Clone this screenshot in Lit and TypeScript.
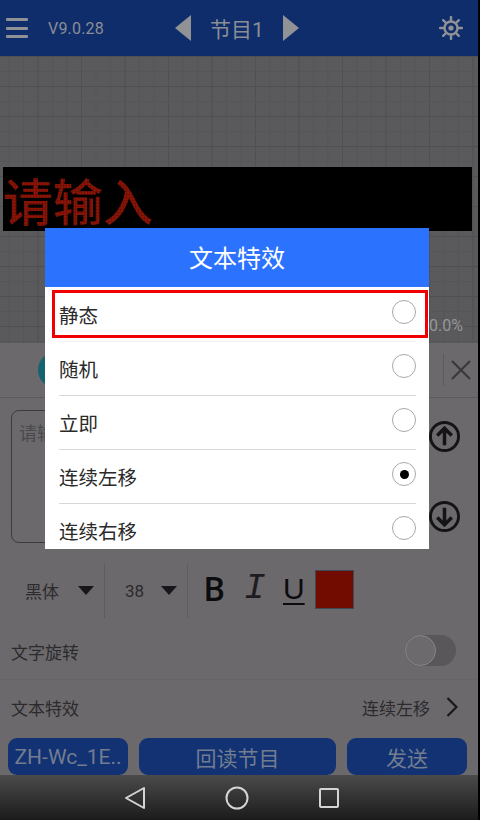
import { LitElement, html, css } from 'lit';
import { customElement } from 'lit/decorators.js';

const EFFECTS = ['静态', '随机', '立即', '连续左移', '连续右移'];
const CHECKED = '连续左移';

@customElement('app-root')
export class AppRoot extends LitElement {
  static styles = css`
    :host {
      display: block;
      position: relative;
      width: 480px;
      height: 820px;
      overflow: hidden;
      background: #000;
      font-family: 'Roboto', 'Noto Sans CJK SC', sans-serif;
      color: #2b2a2d;
    }
    .screen {
      width: 478px;
      height: 820px;
      display: flex;
      flex-direction: column;
    }

    /* top bar */
    .top {
      height: 56px;
      background: #0f2d6b;
      display: flex;
      align-items: center;
      color: #8b8e95;
      flex: none;
    }
    .burger {
      margin-left: 6px;
      width: 22px;
      height: 20px;
      display: flex;
      flex-direction: column;
      justify-content: space-between;
    }
    .burger i {
      display: block;
      height: 3px;
      border-radius: 1px;
      background: #8f9196;
    }
    .version {
      margin-left: 20px;
      width: 60px;
      font-size: 16px;
      letter-spacing: 0.2px;
    }
    .title {
      margin-left: 67px;
      display: flex;
      align-items: center;
      font-size: 21px;
    }
    .title span {
      margin: 0 21px 0 19px;
      width: 52px;
      white-space: nowrap;
    }
    .gear {
      margin-left: auto;
      margin-right: 15px;
    }

    /* led preview */
    .canvas {
      height: 287px;
      flex: none;
      position: relative;
      background-color: #5a595b;
      background-image: linear-gradient(to bottom, #4f4e50 1px, transparent 1px),
        linear-gradient(to bottom, #565557 1px, transparent 1px),
        linear-gradient(to right, #505052 1px, transparent 1px),
        linear-gradient(to right, #555456 1px, transparent 1px);
      background-size: 100% 30px, 100% 15px, 43.5px 100%, 14.5px 100%;
      background-position: 0 0, 0 0, -6px 0, -6px 0;
    }
    .led {
      position: absolute;
      left: 3px;
      top: 111px;
      width: 469px;
      height: 64px;
      background: #000;
    }
    .led span {
      position: absolute;
      left: 0;
      top: 0;
      font-family: 'Noto Sans CJK SC', sans-serif;
      font-size: 50px;
      font-weight: 500;
      line-height: 64px;
      color: #8c1407;
      white-space: nowrap;
    }
    .led::after {
      content: '';
      position: absolute;
      inset: 0;
      background-image: linear-gradient(to bottom, rgba(0, 0, 0, 0.14) 1px, transparent 1px),
        linear-gradient(to right, rgba(0, 0, 0, 0.14) 1px, transparent 1px);
      background-size: 100% 3px, 3px 100%;
    }
    .percent {
      position: absolute;
      right: 15px;
      bottom: 8px;
      font-size: 16px;
      color: #96969a;
    }

    /* bottom panel */
    .panel {
      flex: 1;
      background: #6b696c;
      display: flex;
      flex-direction: column;
    }
    .tabs {
      height: 54px;
      flex: none;
      border-bottom: 1px solid #5c5a5d;
      display: flex;
      align-items: center;
    }
    .avatar {
      margin-left: 38px;
      width: 36px;
      height: 36px;
      border-radius: 50%;
      background: #14636e;
    }
    .tab-end {
      margin-left: auto;
      height: 32px;
      padding-left: 7px;
      margin-right: 7px;
      border-left: 1px solid #5c5a5d;
      display: flex;
      align-items: center;
    }
    .editor {
      flex: none;
      height: 165px;
      box-sizing: border-box;
      padding: 12px 18px 20px 11px;
      display: flex;
    }
    .area {
      flex: 1;
      height: 133px;
      box-sizing: border-box;
      border: 1px solid #3c3b3e;
      border-radius: 8px;
      padding: 9px 7px;
      font-family: 'Noto Sans CJK SC', sans-serif;
      font-size: 18px;
      line-height: 24px;
      color: #4a494c;
    }
    .moves {
      width: 31px;
      padding-top: 11px;
      display: flex;
      flex-direction: column;
      gap: 49px;
    }
    .tools {
      height: 55px;
      flex: none;
      display: flex;
      align-items: center;
      font-size: 17px;
    }
    .pick {
      height: 54px;
      box-sizing: border-box;
      border-right: 1px solid #5e5c5f;
      display: flex;
      align-items: center;
    }
    .pick span {
      white-space: nowrap;
    }
    .pick i {
      width: 0;
      height: 0;
      border-left: 8px solid transparent;
      border-right: 8px solid transparent;
      border-top: 9px solid #17161a;
    }
    .pick.font {
      width: 105px;
      padding-left: 25px;
    }
    .pick.font span {
      width: 53px;
    }
    .pick.size {
      padding-left: 20px;
      width: 83px;
    }
    .pick.size span {
      width: 36px;
    }
    .fmt {
      color: #0c0c0e;
      line-height: 1;
      display: block;
      margin-top: -3px;
    }
    .fmt.b {
      margin-left: 16px;
      font-family: 'Roboto', sans-serif;
      font-weight: 500;
      font-size: 33px;
      width: 40px;
    }
    .fmt.i {
      font-family: 'Liberation Mono', monospace;
      font-style: italic;
      font-size: 36px;
      width: 39px;
      color: #1d1c20;
    }
    .fmt.u {
      font-family: 'Liberation Sans', sans-serif;
      font-size: 30px;
      width: 32px;
      text-decoration: underline;
      text-underline-offset: 4px;
      text-decoration-thickness: 2px;
    }
    .swatch {
      width: 39px;
      height: 39px;
      box-sizing: border-box;
      background: #730c00;
      border: 1px solid #3b4a55;
      margin-top: -2px;
    }
    .row {
      flex: none;
      display: flex;
      align-items: center;
      justify-content: space-between;
      padding: 0 20px 0 11px;
      font-size: 17px;
    }
    .row.rotate {
      height: 61px;
      border-bottom: 1px solid #676568;
      padding-right: 22px;
    }
    .row.rotate span {
      margin-top: 5px;
    }
    .row.effect {
      height: 54px;
    }
    .value {
      display: flex;
      align-items: center;
      gap: 16px;
    }
    .toggle {
      position: relative;
      width: 51px;
      height: 31px;
      margin-top: 3px;
      border-radius: 16px;
      background: #59575a;
    }
    /* thumb sits over the track */
    .toggle::after {
      content: '';
      position: absolute;
      left: 0;
      top: 0;
      width: 31px;
      height: 31px;
      box-sizing: border-box;
      border-radius: 50%;
      background: #6c6a6d;
      border: 1px solid #87868a;
    }
    .actions {
      height: 37px;
      flex: none;
      margin-top: 4px;
      padding: 0 11px 0 8px;
      display: grid;
      grid-template-columns: 120px 197px 120px;
      column-gap: 11px;
    }
    .actions div {
      border-radius: 9px;
      background: #123273;
      color: #737d8f;
      display: flex;
      align-items: center;
      justify-content: center;
      font-size: 21px;
      white-space: nowrap;
    }

    /* android nav bar */
    .nav {
      height: 45px;
      flex: none;
      background: linear-gradient(to bottom, #4c4b4c, #1b1b1b);
      display: flex;
      align-items: center;
      padding-left: 124px;
    }
    .nav svg {
      display: block;
    }
    .nav .home {
      margin-left: 79px;
    }
    .nav .recent {
      margin-left: 69px;
    }

    /* dialog */
    .dialog {
      position: absolute;
      left: 45px;
      top: 228px;
      width: 384px;
      height: 321px;
      background: #fff;
      overflow: hidden;
      box-sizing: border-box;
      font-family: 'Noto Sans CJK SC', sans-serif;
    }
    .dialog h1 {
      margin: 0 0 1px;
      height: 59px;
      padding-bottom: 2px;
      box-sizing: border-box;
      background: #2b72ff;
      color: #fff;
      font-size: 24px;
      font-weight: 400;
      display: flex;
      align-items: center;
      justify-content: center;
    }
    .item {
      height: 54px;
      box-sizing: border-box;
      margin: 0 13px 0 14px;
      border-bottom: 1px solid #d8d7d9;
      display: flex;
      justify-content: space-between;
      font-size: 19.5px;
      color: #2a2a2a;
    }
    .item:first-of-type {
      border-bottom-color: #f0eff1;
    }
    .item span {
      line-height: 53px;
    }
    .radio {
      width: 24px;
      height: 24px;
      margin-top: 12px;
      box-sizing: border-box;
      border: 1px solid #a9a8aa;
      border-radius: 50%;
      display: flex;
      align-items: center;
      justify-content: center;
    }
    .radio.on::after {
      content: '';
      width: 9px;
      height: 9px;
      border-radius: 50%;
      background: #000;
    }
    .mark {
      position: absolute;
      left: 7px;
      top: 62px;
      width: 376px;
      height: 48px;
      box-sizing: border-box;
      border: 3px solid #f00000;
    }
  `;

  render() {
    return html`
      <div class="screen">
        <div class="top">
          <div class="burger"><i></i><i></i><i></i></div>
          <div class="version">V9.0.28</div>
          <div class="title">
            <svg width="16" height="26" viewBox="0 0 16 26"><path d="M16 0V26L0 13Z" fill="#909296" /></svg>
            <span>节目1</span>
            <svg width="16" height="26" viewBox="0 0 16 26"><path d="M0 0V26L16 13Z" fill="#909296" /></svg>
          </div>
          <svg class="gear" width="24" height="24" viewBox="0 0 24 24" fill="none" stroke="#8f9196">
            <circle cx="12" cy="12" r="6.5" stroke-width="2.4" />
            <circle cx="12" cy="12" r="2.6" fill="#8f9196" stroke="none" />
            <path
              d="M12 1V5M12 19V23M1 12H5M19 12H23M4.2 4.2L7 7M17 17L19.8 19.8M19.8 4.2L17 7M7 17L4.2 19.8"
              stroke-width="2.4"
              stroke-linecap="round"
            />
          </svg>
        </div>

        <div class="canvas">
          <div class="led"><span>请输入</span></div>
          <div class="percent">100.0%</div>
        </div>

        <div class="panel">
          <div class="tabs">
            <div class="avatar"></div>
            <div class="tab-end">
              <svg width="20" height="20" viewBox="0 0 20 20" stroke="#39383b" stroke-width="2.2">
                <path d="M1 1L19 19M19 1L1 19" />
              </svg>
            </div>
          </div>

          <div class="editor">
            <div class="area">请输入</div>
            <div class="moves">
              <svg width="31" height="31" viewBox="0 0 32 32" fill="none" stroke="#141316" stroke-width="3">
                <circle cx="16" cy="16" r="14.5" />
                <path d="M16 25V8M8.5 15L16 7.5L23.5 15" stroke-width="3.6" />
              </svg>
              <svg width="31" height="31" viewBox="0 0 32 32" fill="none" stroke="#141316" stroke-width="3">
                <circle cx="16" cy="16" r="14.5" />
                <path d="M16 7V24M8.5 17L16 24.5L23.5 17" stroke-width="3.6" />
              </svg>
            </div>
          </div>

          <div class="tools">
            <div class="pick font"><span>黑体</span><i></i></div>
            <div class="pick size"><span>38</span><i></i></div>
            <span class="fmt b">B</span>
            <span class="fmt i">I</span>
            <span class="fmt u">U</span>
            <div class="swatch"></div>
          </div>

          <div class="row rotate">
            <span>文字旋转</span>
            <div class="toggle"></div>
          </div>
          <div class="row effect">
            <span>文本特效</span>
            <div class="value">
              <span>连续左移</span>
              <svg width="12" height="20" viewBox="0 0 12 20" fill="none" stroke="#19181b" stroke-width="2.2">
                <path d="M1.5 1L10.5 10L1.5 19" />
              </svg>
            </div>
          </div>

          <div class="actions">
            <div>ZH-Wc_1E..</div>
            <div>回读节目</div>
            <div>发送</div>
          </div>
        </div>

        <div class="nav">
          <svg width="22" height="24" viewBox="0 0 22 24" fill="none" stroke="#d4d4d4" stroke-width="2">
            <path d="M20 2V22L2 12Z" stroke-linejoin="round" />
          </svg>
          <svg class="home" width="24" height="24" viewBox="0 0 24 24" fill="none" stroke="#d4d4d4" stroke-width="2">
            <circle cx="12" cy="12" r="10.5" />
          </svg>
          <svg class="recent" width="22" height="22" viewBox="0 0 22 22" fill="none" stroke="#d4d4d4" stroke-width="2">
            <rect x="2" y="2" width="18" height="18" rx="1" />
          </svg>
        </div>
      </div>

      <div class="dialog">
        <h1>文本特效</h1>
        ${EFFECTS.map(
          (name) => html`
            <div class="item">
              <span>${name}</span>
              <div class="radio ${name === CHECKED ? 'on' : ''}"></div>
            </div>
          `,
        )}
        <div class="mark"></div>
      </div>
    `;
  }
}
